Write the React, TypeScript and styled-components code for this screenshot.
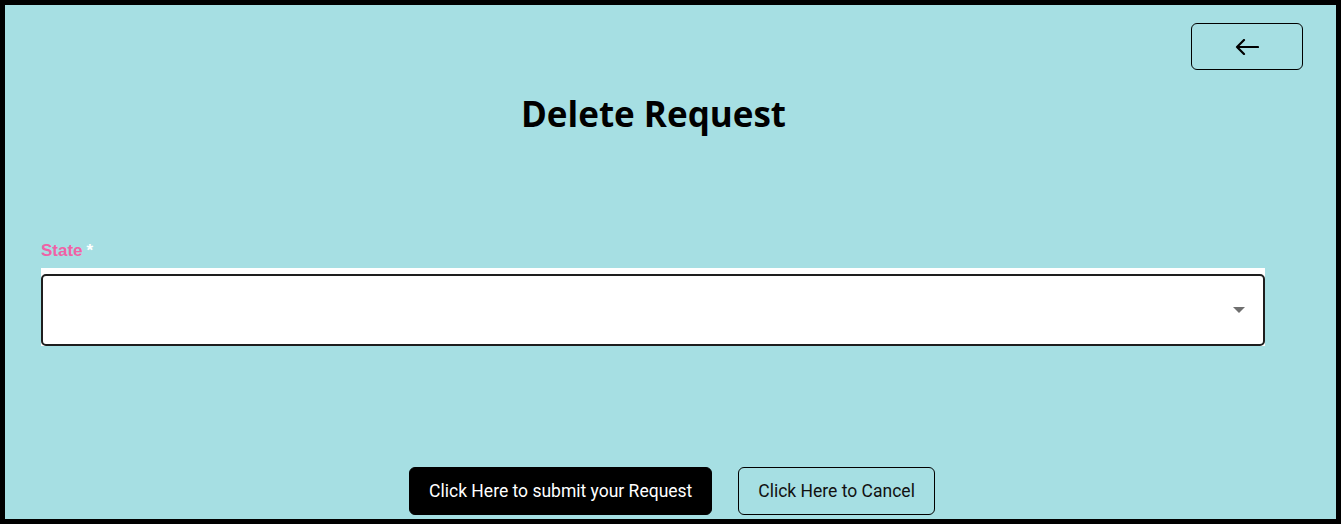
import styled, { createGlobalStyle } from "styled-components";

const GlobalStyle = createGlobalStyle`
  html, body {
    margin: 0;
    padding: 0;
    background: #ffffff;
  }
  * {
    box-sizing: border-box;
  }
`;

const Page = styled.div`
  display: flex;
  flex-direction: column;
  width: 1341px;
  height: 524px;
  border: 5px solid #000000;
  background-color: #a6dfe3;
  font-family: "Liberation Sans", Arial, sans-serif;
`;

const TopBar = styled.div`
  display: flex;
  justify-content: flex-end;
  padding: 18px 33px 0 0;
`;

const BackButton = styled.button`
  display: flex;
  align-items: center;
  justify-content: center;
  width: 112px;
  height: 47px;
  border: 1px solid #000000;
  border-radius: 6px;
  background: transparent;
  cursor: pointer;
`;

const Title = styled.h1`
  margin: 20px 0 0;
  padding-right: 34px;
  text-align: center;
  font-family: "Open Sans", sans-serif;
  font-size: 35px;
  font-weight: 700;
  color: #000000;
  line-height: 48px;
`;

const Form = styled.div`
  display: flex;
  flex-direction: column;
  padding: 103px 71px 0 36px;
`;

const Label = styled.label`
  font-size: 17px;
  font-weight: 700;
  color: #f062a6;
  line-height: 19px;
  span {
    color: #ffffff;
    margin-left: 4px;
  }
`;

const SelectShell = styled.div`
  margin-top: 8px;
  padding-top: 6px;
  background: #ffffff;
`;

const SelectBox = styled.div`
  display: flex;
  align-items: center;
  justify-content: flex-end;
  height: 72px;
  padding-right: 18px;
  border: 2px solid #1e1e1e;
  border-radius: 5px;
  background: #ffffff;
`;

const Caret = styled.span`
  width: 0;
  height: 0;
  border-left: 6px solid transparent;
  border-right: 6px solid transparent;
  border-top: 6px solid #6f6f6f;
`;

const Actions = styled.div`
  display: flex;
  justify-content: center;
  gap: 26px;
  margin-top: 121px;
  padding-left: 3px;
`;

const ActionButton = styled.button<{ $primary?: boolean }>`
  height: 48px;
  padding: 0 19px;
  border: 1px solid #000000;
  border-radius: 6px;
  background: ${(p) => (p.$primary ? "#000000" : "transparent")};
  color: ${(p) => (p.$primary ? "#ffffff" : "#111111")};
  font-family: Roboto, sans-serif;
  font-size: 17.5px;
  cursor: pointer;
`;

export default function App() {
  return (
    <>
      <GlobalStyle />
      <Page>
        <TopBar>
          <BackButton aria-label="back">
            <svg width="24" height="16" viewBox="0 0 24 16" fill="none">
              <path
                d="M23 8H2M9 1L2 8l7 7"
                stroke="#000"
                strokeWidth="2.2"
                strokeLinecap="round"
                strokeLinejoin="round"
              />
            </svg>
          </BackButton>
        </TopBar>
        <Title>Delete Request</Title>
        <Form>
          <Label>
            State<span>*</span>
          </Label>
          <SelectShell>
            <SelectBox>
              <Caret />
            </SelectBox>
          </SelectShell>
        </Form>
        <Actions>
          <ActionButton $primary>Click Here to submit your Request</ActionButton>
          <ActionButton>Click Here to Cancel</ActionButton>
        </Actions>
      </Page>
    </>
  );
}
